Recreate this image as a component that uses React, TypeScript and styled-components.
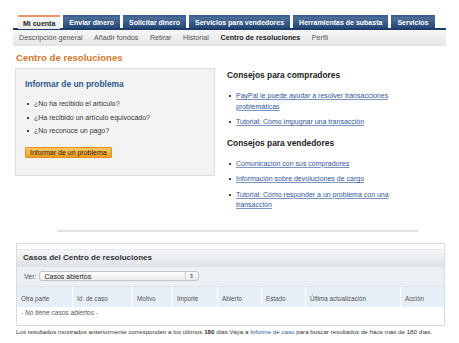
import styled, { createGlobalStyle } from 'styled-components';

const GlobalStyle = createGlobalStyle`
  body {
    margin: 0;
    background: #fff;
    font-family: "Liberation Sans", Arial, sans-serif;
    color: #333;
  }
`;

const Page = styled.div`
  width: 433px;
  padding: 15px 13px 0 13px;
`;

const Tabs = styled.div`
  display: flex;
  align-items: flex-end;
  gap: 3px;
  padding-left: 5px;
  border-bottom: 2px solid #1b3d68;
`;

const Tab = styled.div<{ $active?: boolean }>`
  height: ${(p) => (p.$active ? '12px' : '11px')};
  line-height: ${(p) => (p.$active ? '13px' : '12px')};
  padding: 0 ${(p) => (p.$active ? '5px' : '6px')};
  font-size: 7px;
  font-weight: bold;
  white-space: nowrap;
  color: ${(p) => (p.$active ? '#222' : '#fff')};
  background: ${(p) =>
    p.$active
      ? 'linear-gradient(#fafafa, #ebebeb)'
      : 'linear-gradient(#4f7099, #27497a)'};
  border-top: 2px solid ${(p) => (p.$active ? '#e9946a' : '#3e6090')};
  margin-bottom: ${(p) => (p.$active ? '-1px' : '0')};
`;

const SubNav = styled.div`
  display: flex;
  align-items: center;
  height: 15px;
  padding-left: 6px;
  gap: 11.5px;
  background: linear-gradient(#f7f7f7, #e4e6e9);
  border-bottom: 1px solid #dfe3e8;
`;

const SubItem = styled.span<{ $current?: boolean }>`
  font-size: 7.2px;
  white-space: nowrap;
  color: ${(p) => (p.$current ? '#222' : '#555')};
  font-weight: ${(p) => (p.$current ? 'bold' : 'normal')};
`;

const Title = styled.h1`
  margin: 0;
  padding: 6px 0 0 3px;
  height: 16px;
  font-size: 9.6px;
  font-weight: bold;
  color: #d4782b;
`;

const Columns = styled.div`
  display: grid;
  grid-template-columns: 200px 176px;
  column-gap: 12px;
  padding-left: 2px;
`;

const ProblemBox = styled.div`
  height: 108px;
  background: #f3f3f3;
  border: 1px solid #dedede;
  box-sizing: border-box;
  padding: 10px 9px 0 9px;
`;

const BoxHeading = styled.h2`
  margin: 0 0 10px 0;
  font-size: 8.4px;
  font-weight: bold;
  color: #2e5a8e;
`;

const List = styled.ul<{ $gap: number }>`
  margin: 0;
  padding: 0;
  list-style: none;
  display: flex;
  flex-direction: column;
  gap: ${(p) => p.$gap}px;
`;

const Item = styled.li`
  position: relative;
  padding-left: 9px;
  font-size: 7px;
  line-height: 10.5px;
  color: #333;

  &::before {
    content: '';
    position: absolute;
    left: 2px;
    top: 4px;
    width: 2px;
    height: 2px;
    background: #444;
  }
`;

const Button = styled.button`
  margin-top: 10px;
  height: 11px;
  padding: 0 4px;
  font-family: inherit;
  font-size: 7px;
  line-height: 9px;
  color: #222;
  background: linear-gradient(#fdc860, #f29a1c);
  border: 1px solid #e0902a;
  border-radius: 1px;
`;

const Tips = styled.div`
  padding-top: 1px;
`;

const TipsHeading = styled.h3<{ $top: number }>`
  margin: ${(p) => p.$top}px 0 11px 0;
  font-size: 8.4px;
  font-weight: bold;
  color: #222;
`;

const Link = styled.a`
  color: #2f559a;
  text-decoration: underline;
  text-decoration-color: #7e96bf;
`;

const Divider = styled.hr`
  margin: 19px 28px 11px 44px;
  border: 0;
  border-top: 2px solid #e2e2e2;
`;

const CasesPanel = styled.div`
  margin-left: 3px;
  width: 427px;
  border: 1px solid #dcdcdc;
  padding-top: 5px;
`;

const PanelHeader = styled.div`
  height: 16px;
  line-height: 16px;
  padding-left: 6px;
  font-size: 8px;
  font-weight: bold;
  color: #333;
  background: linear-gradient(#f4f6f8, #dfe4ea);
  border-top: 1px solid #e4e8ec;
  border-bottom: 1px solid #dde3ea;
`;

const FilterRow = styled.div`
  height: 19px;
  display: flex;
  align-items: center;
  gap: 3px;
  padding-left: 7px;
  font-size: 7px;
  color: #555;
  background: #ecf0f4;
  border-bottom: 1px solid #e0e6ee;
`;

const Select = styled.div`
  width: 150px;
  height: 8px;
  display: flex;
  align-items: center;
  justify-content: space-between;
  padding: 0 4px;
  font-size: 7px;
  color: #222;
  background: linear-gradient(#fff, #ececec);
  border: 1px solid #c5c5c5;
  border-radius: 3px;
`;

const Arrows = styled.span`
  font-size: 6px;
  color: #444;
  border-left: 1px solid #ccc;
  padding-left: 3px;
  line-height: 8px;
`;

const cols = '56px 60px 40px 45px 44px 44px 95px 1fr';

const HeadRow = styled.div`
  display: grid;
  grid-template-columns: ${cols};
  height: 20px;
  background: #e6eef8;
`;

const HeadCell = styled.div`
  display: flex;
  align-items: flex-end;
  padding: 0 0 5px 4px;
  font-size: 6.3px;
  color: #555;
  border-right: 1px solid #fff;

  &:last-child {
    border-right: 0;
  }
`;

const EmptyRow = styled.div`
  height: 18px;
  padding: 2px 0 0 4px;
  box-sizing: border-box;
  font-size: 6.6px;
  font-style: italic;
  color: #555;
`;

const Footnote = styled.p`
  margin: 2px 0 0 3px;
  font-size: 6.2px;
  color: #333;
  white-space: nowrap;
`;

const tabs = [
  'Mi cuenta',
  'Enviar dinero',
  'Solicitar dinero',
  'Servicios para vendedores',
  'Herramientas de subasta',
  'Servicios',
];

const subItems = [
  'Descripción general',
  'Añadir fondos',
  'Retirar',
  'Historial',
  'Centro de resoluciones',
  'Perfil',
];

const headers = [
  'Otra parte',
  'Id. de caso',
  'Motivo',
  'Importe',
  'Abierto',
  'Estado',
  'Última actualización',
  'Acción',
];

const App = () => {
  return (
    <Page>
      <GlobalStyle />
      <Tabs>
        {tabs.map((t, i) => (
          <Tab key={t} $active={i === 0}>
            {t}
          </Tab>
        ))}
      </Tabs>
      <SubNav>
        {subItems.map((s) => (
          <SubItem key={s} $current={s === 'Centro de resoluciones'}>
            {s}
          </SubItem>
        ))}
      </SubNav>

      <Title>Centro de resoluciones</Title>

      <Columns>
        <ProblemBox>
          <BoxHeading>Informar de un problema</BoxHeading>
          <List $gap={3}>
            <Item>¿No ha recibido el artículo?</Item>
            <Item>¿Ha recibido un artículo equivocado?</Item>
            <Item>¿No reconoce un pago?</Item>
          </List>
          <Button>Informar de un problema</Button>
        </ProblemBox>

        <Tips>
          <TipsHeading $top={1}>Consejos para compradores</TipsHeading>
          <List $gap={5}>
            <Item>
              <Link>PayPal le puede ayudar a resolver transacciones problemáticas</Link>
            </Item>
            <Item>
              <Link>Tutorial: Cómo impugnar una transacción</Link>
            </Item>
          </List>
          <TipsHeading $top={10}>Consejos para vendedores</TipsHeading>
          <List $gap={5}>
            <Item>
              <Link>Comunicación con sus compradores</Link>
            </Item>
            <Item>
              <Link>Información sobre devoluciones de cargo</Link>
            </Item>
            <Item>
              <Link>Tutorial: Cómo responder a un problema con una transacción</Link>
            </Item>
          </List>
        </Tips>
      </Columns>

      <Divider />

      <CasesPanel>
        <PanelHeader>Casos del Centro de resoluciones</PanelHeader>
        <FilterRow>
          Ver:
          <Select>
            Casos abiertos
            <Arrows>⇕</Arrows>
          </Select>
        </FilterRow>
        <HeadRow>
          {headers.map((h) => (
            <HeadCell key={h}>{h}</HeadCell>
          ))}
        </HeadRow>
        <EmptyRow>- No tiene casos abiertos -</EmptyRow>
      </CasesPanel>

      <Footnote>
        Los resultados mostrados anteriormente corresponden a los últimos <b>180</b> días.Vaya a{' '}
        <Link>Informe de caso</Link> para buscar resultados de hace más de 180 días.
      </Footnote>
    </Page>
  );
};

export default App;
